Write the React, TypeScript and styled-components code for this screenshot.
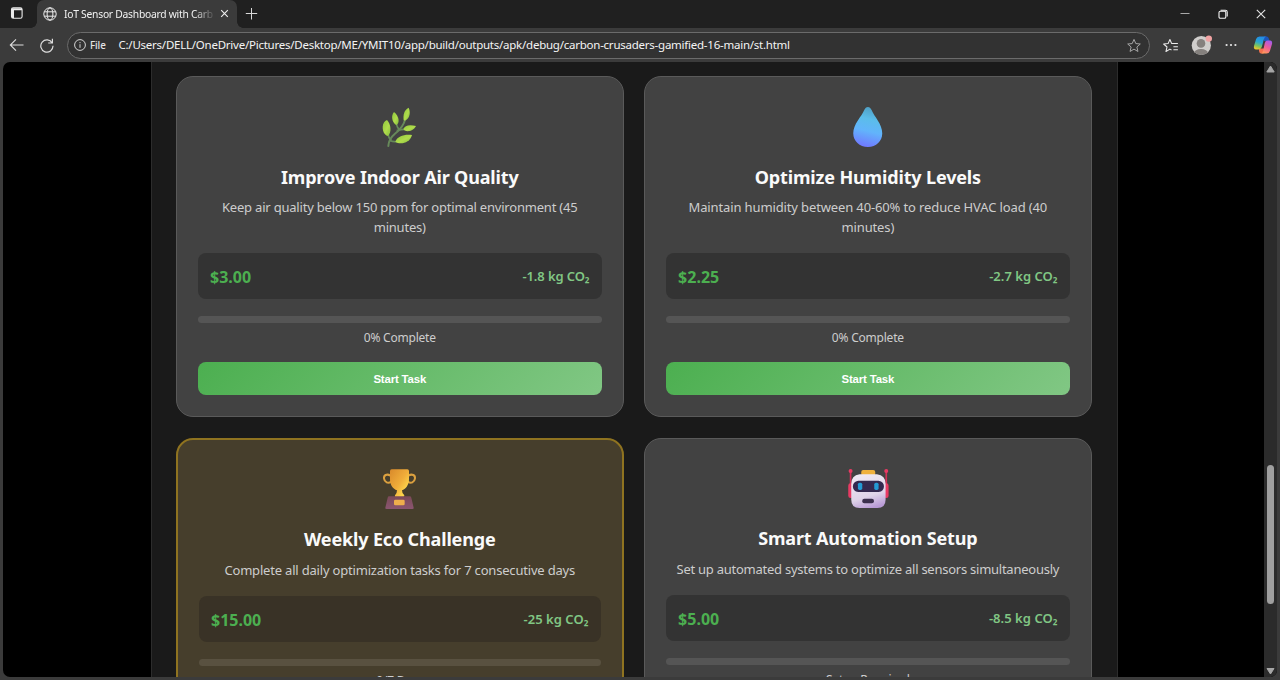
import React from "react";
import styled, { createGlobalStyle } from "styled-components";

const Global = createGlobalStyle`
  * { box-sizing: border-box; }
  html, body { margin: 0; padding: 0; overflow: hidden; background: #3b3b3b; }
  body { font-family: "Noto Sans", "Open Sans", sans-serif; }
`;

const Window = styled.div`
  width: 1280px;
  height: 680px;
  display: flex;
  flex-direction: column;
  background: #3b3b3b;
  overflow: hidden;
`;

const TabStrip = styled.header`
  height: 28px;
  flex: none;
  display: flex;
  background: #202020;
`;

const TabActions = styled.div`
  width: 37px;
  padding: 6px 0 0 10px;
`;

const Tab = styled.div`
  position: relative;
  width: 200px;
  height: 28px;
  display: flex;
  align-items: center;
  padding: 0 8px 1px 6px;
  background: #3b3b3b;
  border-radius: 7px 7px 0 0;
  &::before, &::after {
    content: "";
    position: absolute;
    bottom: 0;
    width: 6px;
    height: 6px;
  }
  &::before { left: -6px; background: radial-gradient(circle at 0 0, #202020 5.5px, #3b3b3b 6px); }
  &::after { right: -6px; background: radial-gradient(circle at 100% 0, #202020 5.5px, #3b3b3b 6px); }
`;

const TabTitle = styled.span`
  flex: 1;
  margin-left: 7px;
  font-size: 10.3px;
  letter-spacing: -0.25px;
  line-height: 26px;
  white-space: nowrap;
  overflow: hidden;
  color: #f2f2f2;
  mask-image: linear-gradient(90deg, #000 87%, transparent 102%);
`;

const TabClose = styled.span`
  width: 9px;
  display: flex;
  margin-left: 7px;
`;

const NewTab = styled.div`
  padding: 7px 0 0 8px;
  line-height: 0;
`;

const Controls = styled.div`
  margin-left: auto;
  display: flex;
  align-items: center;
  gap: 28px;
  padding-right: 14px;
  height: 28px;
`;

const Toolbar = styled.nav`
  height: 34px;
  flex: none;
  display: flex;
  align-items: center;
  padding-left: 8px;
`;

const ToolButton = styled.span<{ $w: number }>`
  width: ${(p) => p.$w}px;
  flex: none;
  display: flex;
`;

const Address = styled.div`
  width: 1083px;
  height: 27px;
  display: flex;
  align-items: center;
  padding: 0 7px 0 6px;
  border: 1px solid #6b6b6b;
  border-radius: 14px;
  background: #323232;
  color: #f4f4f4;
`;

const Scheme = styled.span`
  width: 28.5px;
  margin-left: 4px;
  font-size: 9.8px;
  font-weight: 500;
  letter-spacing: -0.1px;
  color: #e4e4e4;
`;

const Url = styled.span`
  flex: 1;
  margin-top: -1px;
  font-size: 11.5px;
  letter-spacing: -0.24px;
  white-space: nowrap;
`;

const ToolbarEnd = styled.div`
  display: flex;
  align-items: center;
  margin-left: 12.5px;
`;

const Viewport = styled.main`
  width: 1274px;
  height: 615px;
  margin-left: 3px;
  flex: none;
  display: flex;
  overflow: hidden;
  border-radius: 7px;
  background: #000;
`;

const Page = styled.div`
  flex: 1;
  display: flex;
  padding-left: 148px;
  overflow: hidden;
`;

const Dashboard = styled.section`
  width: 967px;
  height: 615px;
  padding: 14px 25px 0 24px;
  border: solid #2c2c2c;
  border-width: 0 1px;
  background: #1a1a1a;
`;

const Grid = styled.div`
  width: 916px;
  display: grid;
  grid-template-columns: 447.5px 447.5px;
  gap: 20.6px;
`;

const Card = styled.article<{ $gold?: boolean }>`
  height: 341.4px;
  display: flex;
  flex-direction: column;
  padding: 20px 20.5px;
  text-align: center;
  border: ${(p) => (p.$gold ? "2px solid #8f7320" : "1px solid #5a5a5a")};
  border-radius: 17px;
  background: ${(p) => (p.$gold ? "#463e2c" : "#424242")};
`;

const Art = styled.svg`
  width: 80px;
  height: 63px;
  flex: none;
  align-self: center;
`;

const Title = styled.h3<{ $ls: number }>`
  margin: 3.5px 0 0;
  font-size: 18px;
  line-height: 26px;
  font-weight: 700;
  letter-spacing: ${(p) => p.$ls}px;
  white-space: nowrap;
  color: #fafafa;
`;

const Description = styled.p<{ $ls: number }>`
  margin: 7.5px -10px 0;
  font-size: 13px;
  line-height: 20px;
  letter-spacing: ${(p) => p.$ls}px;
  color: #cdcdcd;
`;

const Reward = styled.div<{ $gold?: boolean }>`
  height: 45.5px;
  flex: none;
  margin-top: 16.4px;
  display: flex;
  align-items: center;
  justify-content: space-between;
  padding: 0 12.5px;
  border-radius: 8px;
  background: ${(p) => (p.$gold ? "#393226" : "#333333")};
`;

const Amount = styled.span`
  padding-top: 2px;
  font-size: 16px;
  font-weight: 700;
  letter-spacing: 0;
  color: #4caf50;
`;

const Saving = styled.span<{ $ls: number }>`
  font-size: 13px;
  font-weight: 600;
  letter-spacing: ${(p) => p.$ls}px;
  color: #81c784;
`;

const Progress = styled.div<{ $gold?: boolean }>`
  height: 7px;
  flex: none;
  margin-top: 17px;
  border-radius: 4px;
  background: ${(p) => (p.$gold ? "#595140" : "#555555")};
`;

const Status = styled.div`
  height: 18px;
  flex: none;
  margin-top: 6.5px;
  font-size: 12px;
  line-height: 18px;
  letter-spacing: -0.22px;
  color: #cdcdcd;
`;

const Start = styled.button`
  height: 33.5px;
  flex: none;
  margin-top: 14.6px;
  border: 0;
  border-radius: 8px;
  background: linear-gradient(135deg, #4caf50, #81c784);
  color: #fff;
  font: 700 11.4px "Liberation Sans", Arial, sans-serif;
  letter-spacing: -0.15px;
`;

const Scrollbar = styled.aside`
  width: 13px;
  height: 615px;
  display: flex;
  flex-direction: column;
  align-items: center;
  background: #2b2b2b;
`;

const Thumb = styled.div`
  width: 7px;
  height: 139px;
  margin-top: 391px;
  margin-bottom: 62px;
  border-radius: 4px;
  background: #9f9f9f;
`;

const Leaf = () => (
  <Art viewBox="0 21 240 189">
    <defs>
      <linearGradient id="leaf" x1="0" y1="0" x2="1" y2="1">
        <stop offset="0" stopColor="#8fc83c" />
        <stop offset=".55" stopColor="#b0dc4c" />
        <stop offset="1" stopColor="#83bd3c" />
      </linearGradient>
    </defs>
    <g fill="none" stroke="#66895a" strokeLinecap="round">
      <path d="M85 168Q86 147 104 132Q130 112 136 86" strokeWidth="6" />
      <path d="M84 132Q86 145 93 149M109 102Q112 113 118 119M112 121Q124 118 135 118M91 152Q100 156 112 154" strokeWidth="5" />
    </g>
    <g fill="url(#leaf)">
      <path d="M81 90C65 96 65 121 75 133Q79 138 84 138C96 127 93 103 81 90Z" />
      <path d="M102 66C92 76 96 99 109 105C119 101 119 79 102 66Z" />
      <path d="M146 53C132 60 129 75 131 90Q133 93 137 91C150 83 152 67 146 53Z" />
      <path d="M168 108C150 103 134 105 130 117C132 125 157 129 168 108Z" />
      <path d="M156 135C134 132 112 138 106 155C118 164 149 162 156 135Z" />
    </g>
  </Art>
);

const Drop = () => (
  <Art viewBox="-6.75 21 240 189">
    <defs>
      <linearGradient id="drop" x1=".6" y1="0" x2=".42" y2="1">
        <stop offset="0" stopColor="#4f9fc4" />
        <stop offset=".3" stopColor="#5bbdea" />
        <stop offset=".6" stopColor="#62b4fb" />
        <stop offset="1" stopColor="#7078ff" />
      </linearGradient>
    </defs>
    <path d="M113 51C108 51 105 54 102 60C94 80 69 102 69 130C69 154 88 171 113 171S156 154 156 130C156 102 132 80 124 60C121 54 118 51 113 51Z" fill="url(#drop)" />
  </Art>
);

const Trophy = () => (
  <Art viewBox="0 15 240 189">
    <defs>
      <linearGradient id="cup" x1="0" y1="0" x2="1" y2="1">
        <stop offset="0" stopColor="#d98a2b" />
        <stop offset=".5" stopColor="#f0ad3a" />
        <stop offset=".8" stopColor="#ffd84c" />
        <stop offset="1" stopColor="#e89a3c" />
      </linearGradient>
      <linearGradient id="plinth" x1="0" y1="0" x2="0" y2="1">
        <stop offset="0" stopColor="#7b4a58" />
        <stop offset="1" stopColor="#8a5570" />
      </linearGradient>
    </defs>
    <path d="M91 62Q84 57 77 60C69 64 71 78 80 82Q86 85 94 80M145 62Q153 57 160 60C168 64 166 78 157 82Q151 85 143 80" fill="none" stroke="#dba03f" strokeWidth="6" />
    <path d="M90 48Q90 43 95 43H142Q147 43 147 48V73C147 91 136 103 126 106Q126 117 133 121Q134 126 129 127H107Q103 125 105 121Q111 116 111 106C99 102 90 91 90 73Z" fill="url(#cup)" />
    <path d="M87 124H149Q153 124 154 128L161 158Q162 162 157 162H80Q75 162 76 158L83 128Q84 124 87 124Z" fill="url(#plinth)" />
    <rect x="102" y="134" width="32" height="17" rx="4" fill="#eeae4c" />
  </Art>
);

const Robot = () => (
  <Art viewBox="-6.75 12 240 189">
    <defs>
      <linearGradient id="face" x1=".3" y1="0" x2=".6" y2="1">
        <stop offset="0" stopColor="#efe8f3" />
        <stop offset=".65" stopColor="#dfd4e8" />
        <stop offset="1" stopColor="#b99bd6" />
      </linearGradient>
    </defs>
    <path d="M61 49V88M168 49V88" stroke="#d23058" strokeWidth="5" />
    <g fill="#e83a63">
      <circle cx="61" cy="48" r="6" />
      <circle cx="168" cy="48" r="6" />
      <rect x="54" y="85" width="16" height="44" rx="7" />
      <rect x="159" y="85" width="16" height="44" rx="7" />
    </g>
    <rect x="93" y="45" width="42" height="18" rx="6" fill="#efb13d" />
    <path d="M88 58H140Q166 61 166 87V134Q166 159 141 159H88Q63 159 63 134V87Q63 61 88 58Z" fill="url(#face)" />
    <path d="M84 77H145C167 79 166 109 145 111H84C63 109 62 79 84 77Z" fill="#34294f" />
    <rect x="83" y="83" width="13" height="22" rx="5" fill="#249ad4" />
    <rect x="132" y="83" width="13" height="22" rx="5" fill="#249ad4" />
    <rect x="96" y="131" width="35" height="14" rx="6" fill="#3b2f4d" />
  </Art>
);

const STAR = "M6.5 .8 8.2 4.7 12.4 5.1 9.2 7.9 10.2 12.1 6.5 9.9 2.8 12.1 3.8 7.9 .6 5.1 4.8 4.7Z";

type Task = {
  art: React.ReactNode;
  title: string;
  text: React.ReactNode;
  textLs: number;
  amount: string;
  saving: string;
  savingLs: number;
  status: string;
  gold?: boolean;
};

const tasks: Task[] = [
  {
    art: <Leaf />,
    title: "Improve Indoor Air Quality",
    text: <>Keep air quality below 150 ppm for optimal environment (45<br />minutes)</>,
    textLs: -0.2,
    amount: "$3.00",
    saving: "-1.8 kg CO₂",
    savingLs: -0.1,
    status: "0% Complete",
  },
  {
    art: <Drop />,
    title: "Optimize Humidity Levels",
    text: <>Maintain humidity between 40-60% to reduce HVAC load (40<br />minutes)</>,
    textLs: -0.13,
    amount: "$2.25",
    saving: "-2.7 kg CO₂",
    savingLs: 0.02,
    status: "0% Complete",
  },
  {
    art: <Trophy />,
    title: "Weekly Eco Challenge",
    text: "Complete all daily optimization tasks for 7 consecutive days",
    textLs: -0.19,
    amount: "$15.00",
    saving: "-25 kg CO₂",
    savingLs: 0.04,
    status: "0/7 Days",
    gold: true,
  },
  {
    art: <Robot />,
    title: "Smart Automation Setup",
    text: "Set up automated systems to optimize all sensors simultaneously",
    textLs: -0.25,
    amount: "$5.00",
    saving: "-8.5 kg CO₂",
    savingLs: 0.04,
    status: "Setup Required",
  },
];

export default function App() {
  return (
    <>
      <Global />
      <Window>
        <TabStrip>
          <TabActions>
            <svg width="14" height="14" viewBox="0 0 14 14" fill="none" stroke="#ececec" strokeWidth="1.1" display="block">
              <rect x="1.5" y="1.8" width="10.6" height="10.4" rx="1.8" />
              <path d="M1.8 3.2H12M3 4V12" strokeWidth="2" />
            </svg>
          </TabActions>
          <Tab>
            <svg width="14" height="14" viewBox="0 0 14 14" fill="none" stroke="#ededed" strokeWidth="1">
              <circle cx="7" cy="7" r="6.2" />
              <ellipse cx="7" cy="7" rx="2.9" ry="6.2" />
              <path d="M1.2 4.8H12.8M1.2 9.2H12.8" />
            </svg>
            <TabTitle>IoT Sensor Dashboard with Carbo</TabTitle>
            <TabClose>
              <svg width="9" height="9" viewBox="0 0 9 9" stroke="#f0f0f0" strokeWidth="1.1">
                <path d="M1.2 1.2 7.8 7.8M7.8 1.2 1.2 7.8" />
              </svg>
            </TabClose>
          </Tab>
          <NewTab>
            <svg width="13" height="13" viewBox="0 0 13 13" stroke="#d8d8d8" strokeWidth="1">
              <path d="M6.5 1V12.5M.8 6.5H12.2" />
            </svg>
          </NewTab>
          <Controls>
            <svg width="10" height="10" viewBox="0 0 10 10" stroke="#a8a8a8"><path d="M.5 4.5H9.5" /></svg>
            <svg width="10" height="10" viewBox="0 0 10 10" fill="none" stroke="#f4f4f4" strokeWidth="1.1">
              <rect x="1" y="2.3" width="6.8" height="7" rx="1.3" />
              <path d="M2.6 1.2H7.4Q9.2 1.2 9.2 3V7.4" />
            </svg>
            <svg width="10" height="10" viewBox="0 0 10 10" stroke="#e4e4e4" strokeWidth="1.1"><path d="M.8 .8 9.2 9.2M9.2 .8 .8 9.2" /></svg>
          </Controls>
        </TabStrip>
        <Toolbar>
          <ToolButton $w={31}>
            <svg width="17" height="14" viewBox="0 0 17 14" fill="none" stroke="#dedede" strokeWidth="1.1">
              <path d="M8 1.3 2.3 7 8 12.7M2.3 7H15.5" />
            </svg>
          </ToolButton>
          <ToolButton $w={28}>
            <svg width="16" height="15" viewBox="0 0 16 15" fill="none" stroke="#dedede" strokeWidth="1.2">
              <path d="M13.2 5A6.1 6.1 0 1 0 14 7.8M13.4 .8V5H9.2" />
            </svg>
          </ToolButton>
          <Address>
            <svg width="12" height="12" viewBox="0 0 12 12" fill="none" stroke="#d5d5d5" strokeWidth="1">
              <circle cx="6" cy="6" r="5.4" />
              <path d="M6 5.2V8.8M6 3.1V4.2" />
            </svg>
            <Scheme>File</Scheme>
            <Url>C:/Users/DELL/OneDrive/Pictures/Desktop/ME/YMIT10/app/build/outputs/apk/debug/carbon-crusaders-gamified-16-main/st.html</Url>
            <svg width="16" height="15" viewBox="-1 -.5 15 14" fill="none" stroke="#a9a9a9" strokeWidth=".9" strokeLinejoin="round"><path d={STAR} /></svg>
          </Address>
          <ToolbarEnd>
            <ToolButton $w={28}>
              <svg width="17" height="15" viewBox="0 -.5 16 14" fill="none" stroke="#ececec" strokeWidth="1" strokeLinejoin="round">
                <path d="M8 10.7 6.5 9.9 2.8 12.1 3.8 7.9 .6 5.1 4.8 4.7 6.5 .8 8.2 4.7H14M9.8 7.6H14M9.8 10.5H14" />
              </svg>
            </ToolButton>
            <ToolButton $w={34}>
              <svg width="22" height="21" viewBox="0 0 22 21">
                <clipPath id="avatar"><circle cx="10.3" cy="10.5" r="9.6" /></clipPath>
                <g clipPath="url(#avatar)">
                  <rect width="22" height="21" fill="#d0cecc" />
                  <circle cx="10" cy="8.4" r="4.3" fill="#85817e" />
                  <ellipse cx="10" cy="18" rx="7" ry="4" fill="#85817e" />
                </g>
                <circle cx="17.8" cy="3.6" r="3.2" fill="#f1a3a3" />
              </svg>
            </ToolButton>
            <ToolButton $w={28}>
              <svg width="12" height="4" viewBox="0 0 12 4" fill="#e8e8e8">
                <circle cx="1.6" cy="2" r="1.1" /><circle cx="6" cy="2" r="1.1" /><circle cx="10.4" cy="2" r="1.1" />
              </svg>
            </ToolButton>
            <ToolButton $w={20}>
              <svg width="20" height="20" viewBox="0 0 20 20">
                <defs>
                  <linearGradient id="cpa" x1=".6" y1="0" x2=".3" y2="1">
                    <stop offset="0" stopColor="#2389e8" /><stop offset=".45" stopColor="#29a6cf" />
                    <stop offset=".75" stopColor="#7cc35c" /><stop offset="1" stopColor="#f0c52b" />
                  </linearGradient>
                  <linearGradient id="cpb" x1=".7" y1="0" x2=".3" y2="1">
                    <stop offset="0" stopColor="#a65bea" /><stop offset=".5" stopColor="#ee5d98" />
                    <stop offset="1" stopColor="#ff9958" />
                  </linearGradient>
                </defs>
                <path d="M11 1.5H14Q15.3 1.5 16 4L16.5 6H11Z" fill="#1d55bb" />
                <path d="M6 13.5H12L10.5 18.5H8Q6.5 18.5 6 16Z" fill="#f3704d" />
                <path d="M6.5 1.5H13Q11.4 2 10.8 4.5L8.8 12Q8.1 14.4 5.5 14.4H3Q.3 14.4 1 11L3.1 4Q3.9 1.5 6.5 1.5Z" fill="url(#cpa)" />
                <path d="M14.5 5.6H17Q19.7 5.6 19 9L16.9 16Q16.1 18.5 13.5 18.5H8Q9.6 18 10.2 15.5L11.8 8Q12.4 5.6 14.5 5.6Z" fill="url(#cpb)" />
              </svg>
            </ToolButton>
          </ToolbarEnd>
        </Toolbar>
        <Viewport>
          <Page>
            <Dashboard>
              <Grid>
                {tasks.map((t) => (
                  <Card key={t.title} $gold={t.gold}>
                    {t.art}
                    <Title $ls={-0.15}>{t.title}</Title>
                    <Description $ls={t.textLs}>{t.text}</Description>
                    <Reward $gold={t.gold}>
                      <Amount>{t.amount}</Amount>
                      <Saving $ls={t.savingLs}>{t.saving}</Saving>
                    </Reward>
                    <Progress $gold={t.gold} />
                    <Status>{t.status}</Status>
                    {t.status === "0% Complete" && <Start>Start Task</Start>}
                  </Card>
                ))}
              </Grid>
            </Dashboard>
          </Page>
          <Scrollbar>
            <svg width="9" height="12" viewBox="0 0 9 12" fill="#a6a6a6"><path d="M4.5 4 8.2 10H.8Z" stroke="#a6a6a6" strokeLinejoin="round" /></svg>
            <Thumb />
            <svg width="9" height="10" viewBox="0 0 9 10" fill="#a6a6a6"><path d="M4.5 8 8 2.5H1Z" stroke="#a6a6a6" strokeLinejoin="round" /></svg>
          </Scrollbar>
        </Viewport>
      </Window>
    </>
  );
}
